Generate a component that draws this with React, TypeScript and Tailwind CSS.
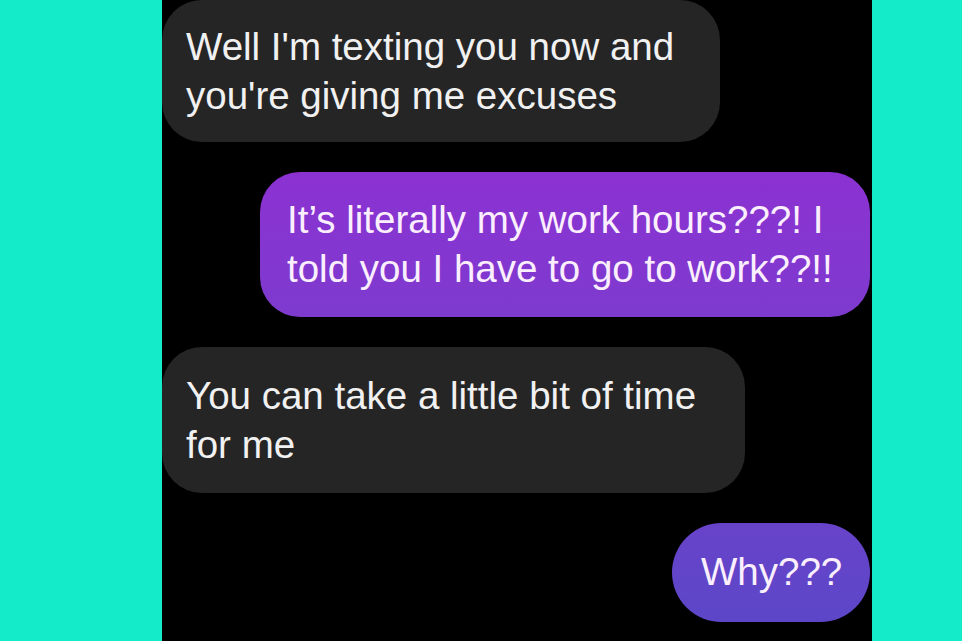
import React from "react";

export default function App() {
  const font = { fontFamily: '"Liberation Sans", Arial, sans-serif' };
  return (
    <div className="w-[962px] h-[641px] bg-[#13ebc9] flex overflow-hidden" style={font}>
      <div className="ml-[162px] w-[710px] h-[641px] bg-black flex flex-col gap-[30px] pr-[2px] overflow-hidden text-[38.5px] leading-[48.5px]">
        <div className="self-start w-[558px] h-[142px] rounded-[40px] bg-[#252525] text-[#f1f1f1] pl-[24px] pt-[23px]">
          Well I'm texting you now and
          <br />
          you're giving me excuses
        </div>
        <div className="self-end w-[610px] h-[145px] rounded-[40px] bg-fixed bg-gradient-to-b from-[#9c22d6] to-[#5a47c7] text-[#fbeffd] pl-[27px] pt-[24px]">
          It’s literally my work hours???! I
          <br />
          told you I have to go to work??!!
        </div>
        <div className="self-start w-[583px] h-[146px] rounded-[40px] bg-[#252525] text-[#f1f1f1] pl-[24px] pt-[25px]">
          You can take a little bit of time
          <br />
          for me
        </div>
        <div className="self-end w-[198px] h-[99px] rounded-full bg-fixed bg-gradient-to-b from-[#9c22d6] to-[#5a47c7] text-[#fbeffd] pl-[29px] pt-[25px]">
          Why???
        </div>
      </div>
    </div>
  );
}
